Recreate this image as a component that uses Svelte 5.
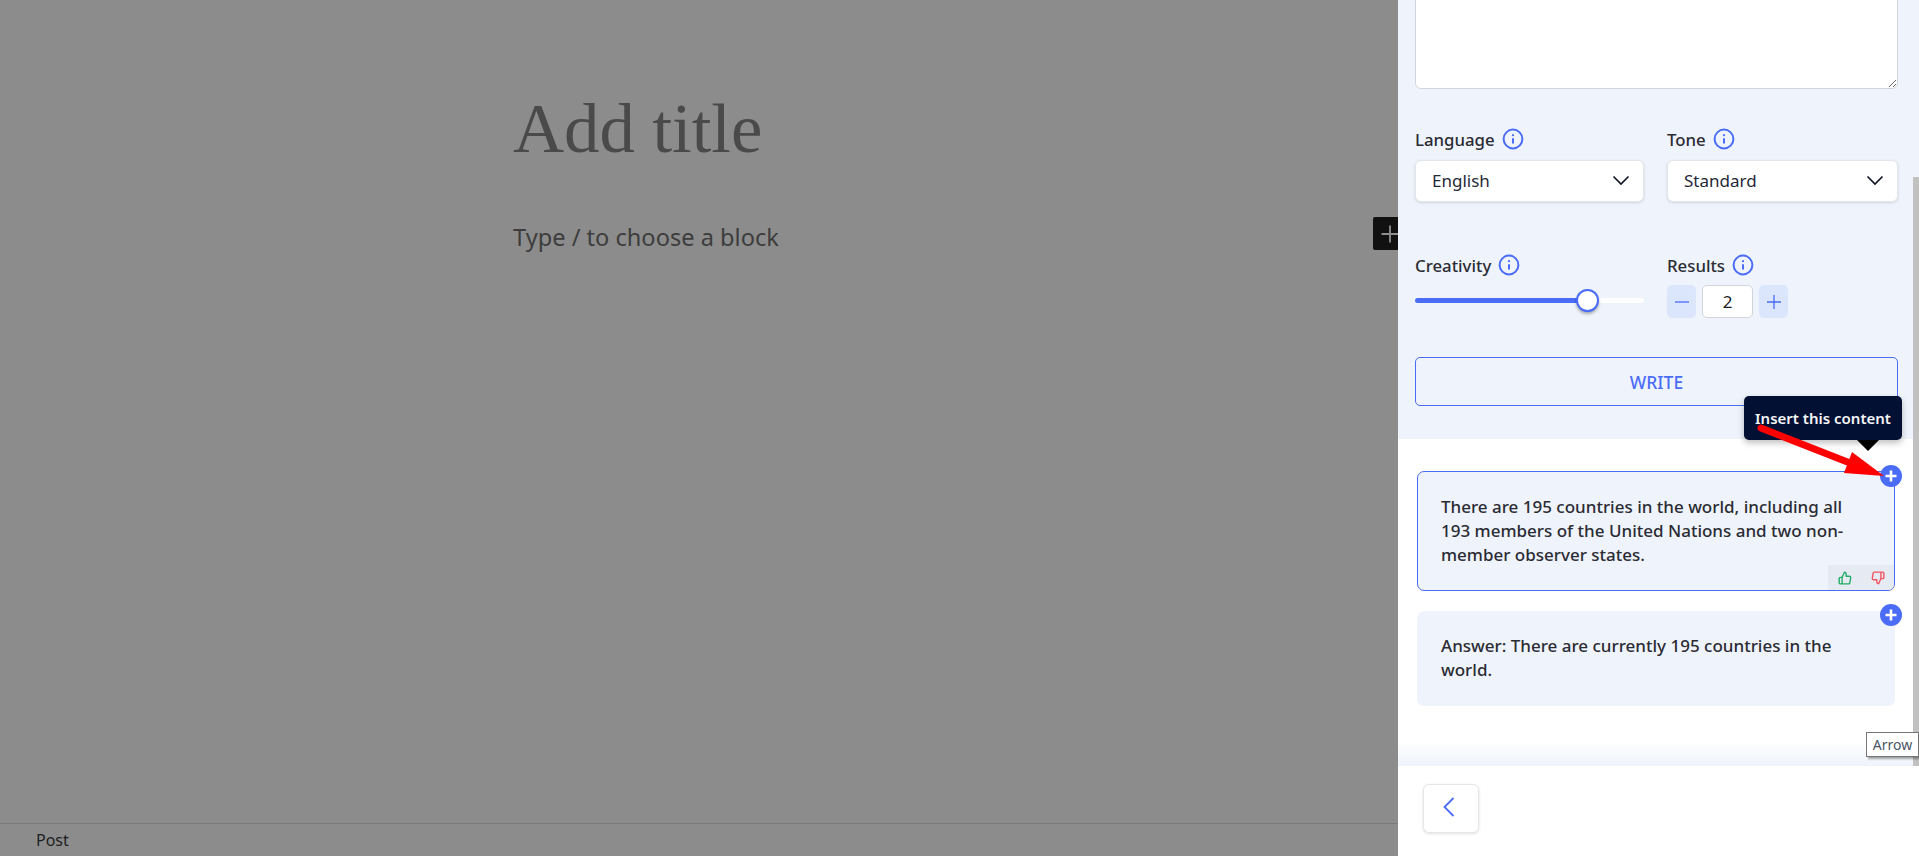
<script>
  let creativity = $state(75.5);
  let results = $state(2);

  const answers = [
    {
      text: 'There are 195 countries in the world, including all 193 members of the United Nations and two non-member observer states.',
      active: true,
    },
    {
      text: 'Answer: There are currently 195 countries in the world.',
      active: false,
    },
  ];
</script>

{#snippet info()}
  <svg class="info" viewBox="0 0 22 22" width="22" height="22" fill="none" aria-hidden="true">
    <circle cx="11" cy="11" r="9.4" stroke="#4a6cf7" stroke-width="2" />
    <circle cx="11" cy="7.2" r="1.1" fill="#4a6cf7" />
    <path d="M11 10.2v5.2" stroke="#4a6cf7" stroke-width="2" />
  </svg>
{/snippet}

{#snippet chevron()}
  <svg viewBox="0 0 18 11" width="18" height="11" fill="none" aria-hidden="true">
    <path d="M1.5 1.5 9 9l7.5-7.5" stroke="#111827" stroke-width="1.7" />
  </svg>
{/snippet}

<div class="page">
  <section class="editor">
    <div class="canvas">
      <h1>Add title</h1>
      <p>Type / to choose a block</p>
    </div>
    <footer class="status">Post</footer>
    <button class="inserter" aria-label="Add block">
      <svg viewBox="0 0 24 24" width="24" height="24" aria-hidden="true">
        <path d="M12 3.500v17M3.500 12h17" stroke="#8f8f8f" stroke-width="1.800" />
      </svg>
    </button>
  </section>

  <aside class="panel">
    <div class="panel-body">
      <div class="form">
        <textarea aria-label="Prompt"></textarea>

        <div class="row">
          <div class="field">
            <div class="label">Language {@render info()}</div>
            <div class="select">English {@render chevron()}</div>
          </div>
          <div class="field">
            <div class="label">Tone {@render info()}</div>
            <div class="select">Standard {@render chevron()}</div>
          </div>
        </div>

        <div class="row second">
          <div class="field">
            <div class="label">Creativity {@render info()}</div>
            <div class="slider">
              <div class="track">
                <div class="fill" style="width: {creativity}%"></div>
                <div class="thumb" style="left: {creativity}%"></div>
              </div>
            </div>
          </div>
          <div class="field">
            <div class="label">Results {@render info()}</div>
            <div class="stepper">
              <button aria-label="Decrease">
                <svg viewBox="0 0 16 16" width="16" height="16" aria-hidden="true">
                  <path d="M1 8h14" stroke="#4a6cf7" stroke-width="1.3" />
                </svg>
              </button>
              <span class="count">{results}</span>
              <button aria-label="Increase">
                <svg viewBox="0 0 16 16" width="16" height="16" aria-hidden="true">
                  <path d="M1 8h14M8 1v14" stroke="#4a6cf7" stroke-width="1.3" />
                </svg>
              </button>
            </div>
          </div>
        </div>

        <button class="write">WRITE</button>
      </div>

      <div class="answers">
        {#each answers as answer}
          <div class="answer" class:active={answer.active}>
            {answer.text}
            <span class="add">
              <svg viewBox="0 0 22 22" width="22" height="22" aria-hidden="true">
                <path d="M11 5.5v11M5.5 11h11" stroke="#fff" stroke-width="2.6" />
              </svg>
            </span>
            {#if answer.active}
              <div class="feedback">
                <svg viewBox="0 0 24 24" width="14" height="14" fill="none" stroke="#22ad67" stroke-width="2.4" stroke-linejoin="round" aria-hidden="true">
                  <path d="M14 9V5a3 3 0 0 0-3-3l-4 9v11h11.3a2 2 0 0 0 2-1.7l1.4-9a2 2 0 0 0-2-2.3zM7 22H4a2 2 0 0 1-2-2v-7a2 2 0 0 1 2-2h3" />
                </svg>
                <svg viewBox="0 0 24 24" width="14" height="14" fill="none" stroke="#f0555f" stroke-width="2.4" stroke-linejoin="round" aria-hidden="true">
                  <path d="M10 15v4a3 3 0 0 0 3 3l4-9V2H5.700a2 2 0 0 0-2 1.700l-1.400 9a2 2 0 0 0 2 2.300zM17 2h3a2 2 0 0 1 2 2v7a2 2 0 0 1-2 2h-3" />
                </svg>
              </div>
            {/if}
          </div>
        {/each}
      </div>
      <div class="fade"></div>
    </div>

    <div class="panel-footer">
      <button class="back" aria-label="Back">
        <svg viewBox="0 0 12 20" width="12" height="20" fill="none" aria-hidden="true">
          <path d="M10.500 1 1.500 10l9 9" stroke="#4a6cf7" stroke-width="1.800" />
        </svg>
      </button>
    </div>

    <div class="scrollbar"></div>
  </aside>

  <!-- annotations drawn over the screenshot -->
  <div class="tip">Insert this content</div>
  <svg class="red-arrow" width="1919" height="856" aria-hidden="true">
    <path d="M1761 428 1850 463" stroke="#f00" stroke-width="7" stroke-linecap="round" />
    <path d="M1884 476 1844 473 1852 452z" fill="#f00" />
  </svg>
  <div class="alt-tip">Arrow</div>
</div>

<style>
  :global(body) {
    margin: 0;
    overflow: hidden;
  }

  .page {
    position: relative;
    display: flex;
    height: 856px;
    font-family: 'Noto Sans', 'Open Sans', sans-serif;
    color: #2b2b33;
  }

  .editor {
    position: relative;
    flex: 1;
    display: flex;
    flex-direction: column;
    background: #8c8c8c;
  }

  .canvas {
    flex: 1;
    padding: 86px 0 0 513px;
    color: #383838;
  }

  h1 {
    margin: 0;
    font-family: 'Liberation Serif', serif;
    font-size: 70.700px;
    font-weight: 400;
    line-height: 84px;
    color: #4a4a4a;
  }

  .canvas p {
    margin: 51px 0 0;
    font-size: 23.600px;
    line-height: 32px;
    color: #3d3d3d;
  }

  .status {
    height: 32px;
    padding-left: 36px;
    border-top: 1px solid #7a7a7a;
    font-size: 16px;
    line-height: 33px;
    color: #1e1e1e;
  }

  .inserter {
    position: absolute;
    top: 217px;
    right: -9px;
    width: 34px;
    height: 33px;
    padding: 0;
    border: 0;
    border-radius: 2px;
    background: #111;
    display: flex;
    align-items: center;
    justify-content: center;
  }

  .panel {
    position: relative;
    width: 521px;
    display: flex;
    flex-direction: column;
    background: #fff;
  }

  .panel-body {
    height: 766px;
    overflow: hidden;
    position: relative;
  }

  .form {
    margin-top: -30px;
    padding: 0 21px 33px 17px;
    background: #eff4fc;
  }

  textarea {
    display: block;
    box-sizing: border-box;
    width: 100%;
    height: 119px;
    margin-bottom: 39px;
    border: 1px solid #d1d5db;
    border-radius: 6px;
    background: #fff;
  }

  .row {
    display: grid;
    grid-template-columns: 229px 1fr;
    gap: 23px;
  }

  .row.second {
    margin-top: 52px;
  }

  .label {
    box-sizing: border-box;
    display: flex;
    align-items: center;
    gap: 7px;
    height: 24px;
    padding-bottom: 2px;
    margin-bottom: 8px;
    font-size: 16.800px;
    font-weight: 500;
  }

  .second .label {
    margin-bottom: 7px;
  }

  .select {
    box-sizing: border-box;
    height: 42px;
    padding: 0 13px 2px 16px;
    display: flex;
    align-items: center;
    justify-content: space-between;
    background: #fff;
    border: 1px solid #e2e5ea;
    border-radius: 6px;
    box-shadow: 0 1px 3px rgba(0, 0, 0, 0.12);
    font-size: 17px;
    color: #1f2937;
  }

  .slider {
    height: 30px;
    display: flex;
    align-items: center;
  }

  .track {
    position: relative;
    width: 100%;
    height: 5px;
    border-radius: 3px;
    background: #fff;
  }

  .fill {
    height: 100%;
    border-radius: 3px;
    background: #4a6cf7;
  }

  .thumb {
    position: absolute;
    top: 50%;
    box-sizing: border-box;
    width: 23px;
    height: 23px;
    margin: -11.500px 0 0 -11.500px;
    border: 2px solid #4a6cf7;
    border-radius: 50%;
    background: #fff;
    box-shadow: 0 2px 3px rgba(0, 0, 0, 0.3);
  }

  .stepper {
    display: flex;
    gap: 6px;
    height: 33px;
  }

  .stepper button {
    width: 29px;
    padding: 0;
    border: 0;
    border-radius: 5px;
    background: #dbe6fd;
    display: flex;
    align-items: center;
    justify-content: center;
  }

  .count {
    box-sizing: border-box;
    width: 51px;
    display: flex;
    align-items: center;
    justify-content: center;
    border: 1px solid #d1d5db;
    border-radius: 5px;
    background: #fff;
    font-size: 17px;
    color: #222;
  }

  .write {
    display: block;
    box-sizing: border-box;
    width: 100%;
    height: 49px;
    margin-top: 39px;
    border: 1px solid #4a6cf0;
    border-radius: 5px;
    background: transparent;
    font-family: inherit;
    font-size: 17.500px;
    font-weight: 500;
    color: #4a6cf7;
  }

  .answers {
    display: flex;
    flex-direction: column;
    gap: 20px;
    padding: 32px 24px 0 19px;
  }

  .answer {
    position: relative;
    padding: 23px 35px 24px 24px;
    border-radius: 7px;
    background: #eff4fc;
    font-size: 17px;
    line-height: 24px;
    font-weight: 500;
  }

  .answer.active {
    padding: 23px 34px 23px 23px;
    border: 1px solid #4a6cf0;
  }

  .add {
    position: absolute;
    top: -7px;
    right: -7px;
    width: 22px;
    height: 22px;
    border-radius: 50%;
    background: #4a6cf7;
    display: flex;
  }

  .answer.active .add {
    right: -8px;
  }

  .feedback {
    position: absolute;
    right: 0;
    bottom: 0;
    width: 66px;
    height: 25px;
    display: flex;
    align-items: center;
    justify-content: space-around;
    background: #e6eaf2;
    border-bottom-right-radius: 6px;
  }

  .fade {
    position: absolute;
    left: 0;
    right: 0;
    bottom: 0;
    height: 24px;
    background: linear-gradient(to bottom, rgba(238, 243, 251, 0), #eef3fb);
  }

  .panel-footer {
    flex: 1;
    padding: 18px 0 0 25px;
  }

  .back {
    width: 56px;
    height: 49px;
    padding: 0 4px 0 0;
    border: 1px solid #e5e7eb;
    border-radius: 6px;
    background: #fff;
    box-shadow: 0 1px 3px rgba(0, 0, 0, 0.12);
  }

  .scrollbar {
    position: absolute;
    top: 177px;
    right: 0;
    width: 6px;
    height: 589px;
    background: #c1c1c1;
  }

  .tip {
    position: absolute;
    left: 1744px;
    top: 396px;
    width: 158px;
    height: 44px;
    display: flex;
    align-items: center;
    justify-content: center;
    border-radius: 5px;
    background: #021033;
    box-shadow: 0 3px 6px rgba(0, 0, 0, 0.25);
    color: #f4f5f7;
    font-size: 15px;
    font-weight: 600;
  }

  .tip::after {
    content: '';
    position: absolute;
    left: 113px;
    top: 44px;
    border: 11px solid transparent;
    border-top-color: #000;
    border-bottom: 0;
  }

  .red-arrow {
    position: absolute;
    left: 0;
    top: 0;
    pointer-events: none;
  }

  .alt-tip {
    position: absolute;
    left: 1866px;
    top: 732px;
    box-sizing: border-box;
    width: 53px;
    height: 25px;
    border: 1px solid #767676;
    background: #fff;
    box-shadow: 2px 2px 2px rgba(0, 0, 0, 0.35);
    font-size: 14px;
    line-height: 23px;
    text-align: center;
    color: #4b5563;
  }
</style>
